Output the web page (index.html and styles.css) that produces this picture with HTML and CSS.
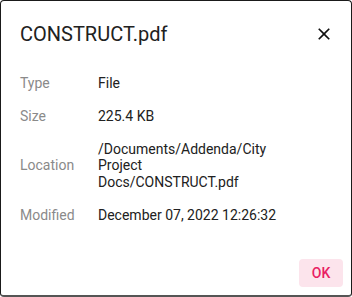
FILE: index.html
```html
<!DOCTYPE html>
<html>
<head>
<meta charset="utf-8">
<link rel="stylesheet" href="styles.css">
</head>
<body>
<div class="dialog">
  <div class="header">
    <h1 class="title">CONSTRUCT.pdf</h1>
    <button class="close" aria-label="Close">
      <svg width="20" height="20" viewBox="0 0 24 24"><path d="M19 6.41 17.59 5 12 10.59 6.41 5 5 6.41 10.59 12 5 17.59 6.41 19 12 13.41 17.59 19 19 17.59 13.41 12z" fill="#111"/></svg>
    </button>
  </div>
  <table class="props">
    <colgroup><col class="c-label"><col class="c-value"></colgroup>
    <tr><td class="label">Type</td><td class="value">File</td></tr>
    <tr><td class="label">Size</td><td class="value">225.4 KB</td></tr>
    <tr><td class="label">Location</td><td class="value">/Documents/Addenda/City Project Docs/CONSTRUCT.pdf</td></tr>
    <tr><td class="label">Modified</td><td class="value">December 07, 2022 12:26:32</td></tr>
  </table>
  <div class="actions">
    <button class="ok">OK</button>
  </div>
</div>
</body>
</html>
```
FILE: styles.css
```css
html, body {
  margin: 0;
  padding: 0;
  background: #fff;
}
body {
  font-family: Roboto, "Liberation Sans", sans-serif;
}
.dialog {
  box-sizing: border-box;
  width: 352px;
  height: 297px;
  border: 1px solid #1a1a1a;
  border-bottom: 2px solid #555;
  border-radius: 4px;
  background: #fff;
  display: flex;
  flex-direction: column;
  padding: 0 7px 0 19px;
}
.header {
  display: flex;
  align-items: center;
  justify-content: space-between;
  height: 44px;
  margin-top: 11px;
}
.title {
  margin: 0;
  font-size: 20px;
  font-weight: 400;
  color: #212121;
  letter-spacing: 0;
}
.close {
  border: 0;
  background: transparent;
  padding: 0;
  width: 40px;
  height: 40px;
  display: flex;
  align-items: center;
  justify-content: center;
  margin-right: 0;
  margin-top: -1px;
}
.props {
  border-collapse: collapse;
  table-layout: fixed;
  width: 262px;
  margin-top: 11px;
  font-size: 14px;
  line-height: 16.8px;
}
.c-label { width: 78px; }
.c-value { width: 184px; }
.props td {
  padding: 8px 0;
  vertical-align: middle;
}
.label {
  color: #8a8a8a;
}
.value {
  color: #212121;
}
.actions {
  margin-top: auto;
  display: flex;
  justify-content: flex-end;
  padding-bottom: 8px;
}
.ok {
  border: 0;
  border-radius: 4px;
  background: #fce4ec;
  color: #e91e63;
  font-family: Roboto, "Liberation Sans", sans-serif;
  font-size: 14px;
  font-weight: 500;
  width: 44px;
  height: 28px;
  padding: 0;
  margin-right: 1px;
}
```
